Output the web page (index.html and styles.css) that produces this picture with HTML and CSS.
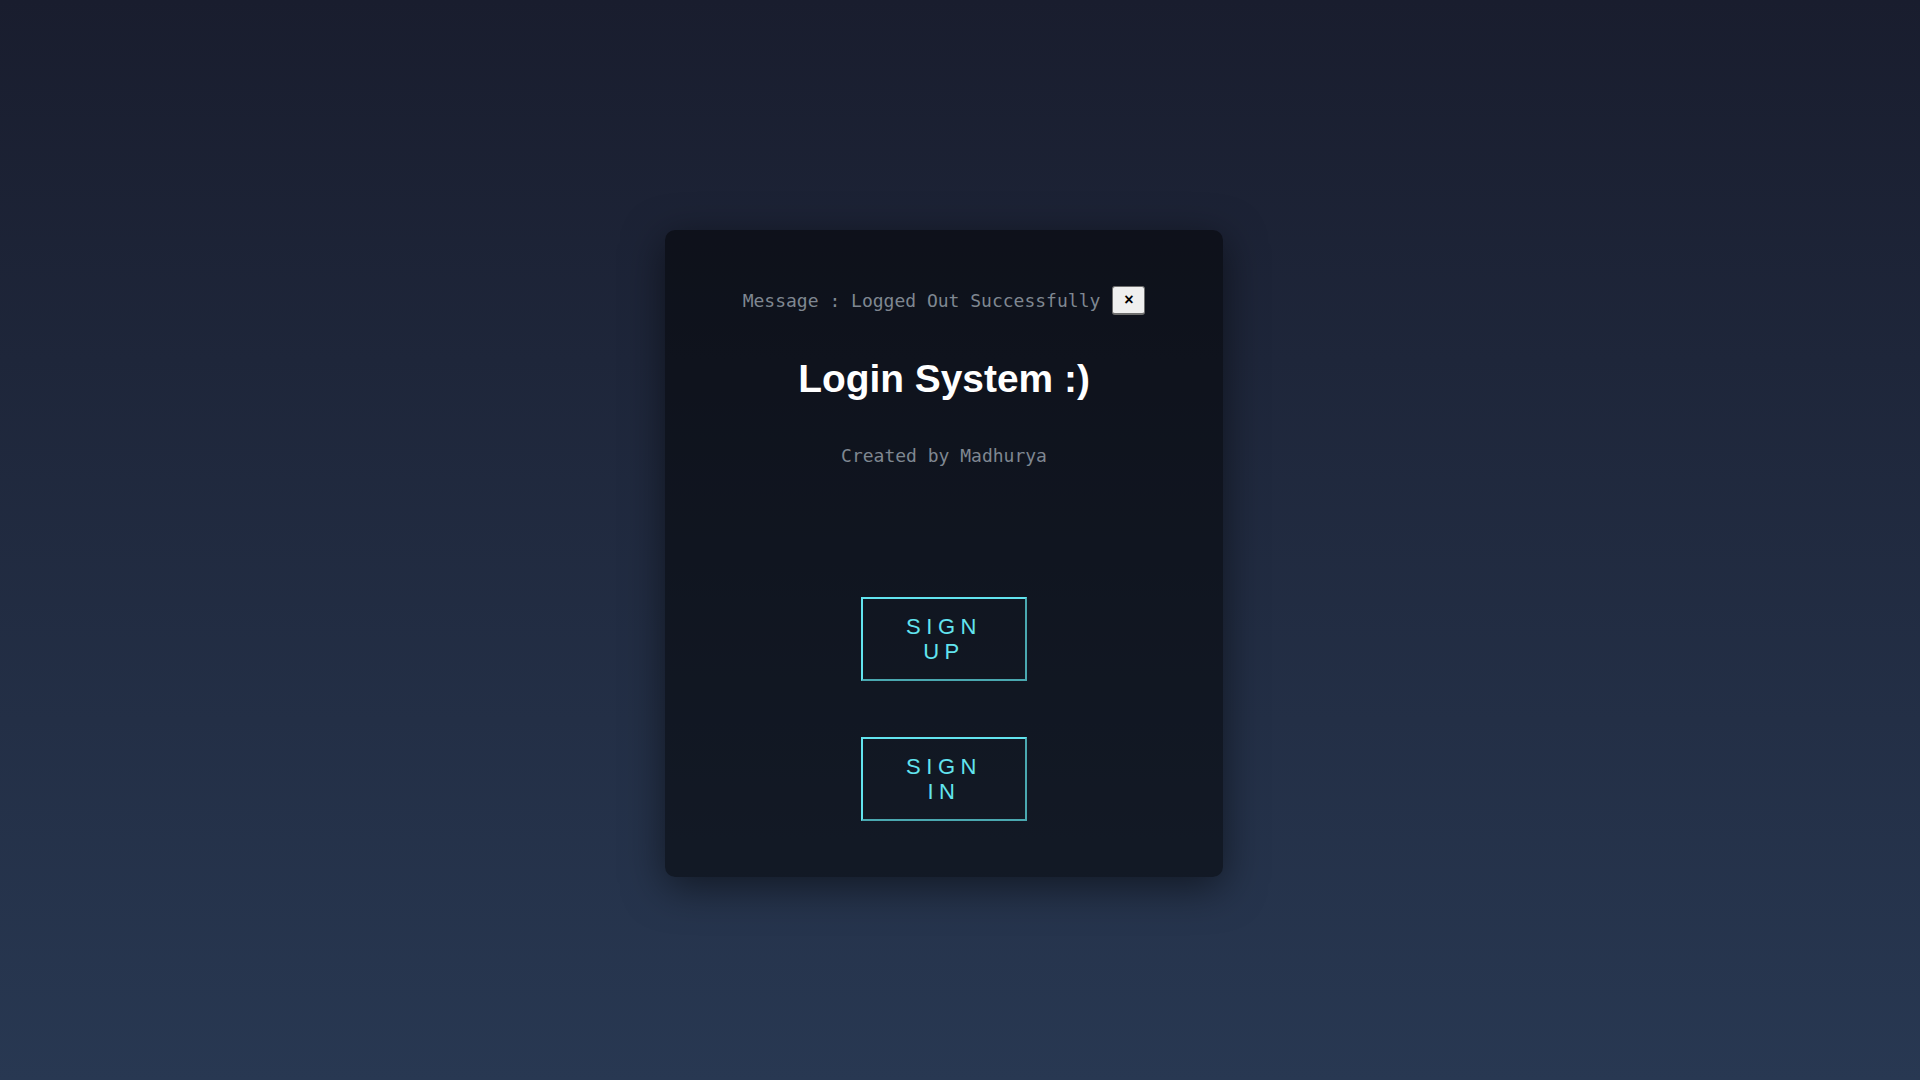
FILE: index.html
```html
<!DOCTYPE html>
<html lang="en">
<head>
<meta charset="utf-8">
<title>Login System</title>
<link rel="stylesheet" href="styles.css">
</head>
<body>
<main class="page">
  <section class="card">
    <div class="message">
      <span class="message-text">Message : Logged Out Successfully</span>
      <button class="close-btn" type="button">×</button>
    </div>
    <h1 class="title">Login System :)</h1>
    <p class="credit">Created by Madhurya</p>
    <div class="actions">
      <button class="action-btn" type="button">SIGN UP</button>
      <button class="action-btn" type="button">SIGN IN</button>
    </div>
  </section>
</main>
</body>
</html>
```

FILE: styles.css
```css
* { box-sizing: border-box; }

html, body {
  margin: 0;
  padding: 0;
  height: 100%;
}

body {
  background: linear-gradient(to bottom, #191d2e 0%, #283852 100%);
  font-family: "Liberation Sans", Arial, sans-serif;
}

.page {
  height: 100vh;
  display: flex;
  justify-content: center;
  align-items: flex-start;
  padding-top: 230px;
  padding-right: 32px;
}

.card {
  width: 558px;
  height: 647px;
  padding: 56px 0 56px;
  border-radius: 10px;
  background: rgba(0, 0, 0, 0.5);
  box-shadow: 0 10px 40px rgba(0, 0, 0, 0.5);
  display: flex;
  flex-direction: column;
  align-items: center;
}

.message {
  display: flex;
  align-items: center;
  gap: 12px;
  height: 29px;
}

.message-text {
  font-family: "DejaVu Sans Mono", monospace;
  font-size: 18px;
  color: #7f8791;
}

.close-btn {
  width: 33px;
  height: 29px;
  padding: 0;
  background: #efefef;
  border: 1px solid #6e6e6e;
  border-bottom-width: 2px;
  border-radius: 3px;
  font-family: "Liberation Sans", Arial, sans-serif;
  font-weight: bold;
  font-size: 16px;
  color: #000;
  display: flex;
  align-items: center;
  justify-content: center;
}

.title {
  margin: 42px 0 0;
  font-size: 38.9px;
  font-weight: bold;
  color: #ffffff;
  line-height: normal;
}

.credit {
  margin: 44px 0 0;
  font-family: "DejaVu Sans Mono", monospace;
  font-size: 18px;
  color: #7f8791;
}

.actions {
  margin-top: 131px;
  display: flex;
  flex-direction: column;
  align-items: center;
  gap: 56px;
}

.action-btn {
  width: 166px;
  height: 84px;
  padding: 15px 40px;
  background: transparent;
  border: 2px solid;
  border-color: #62e4ef #4aa8b0 #4aa8b0 #62e4ef;
  color: #62e4ef;
  font-family: "Liberation Sans", Arial, sans-serif;
  font-size: 22px;
  line-height: 25px;
  letter-spacing: 5.5px;
  text-align: center;
}
```
